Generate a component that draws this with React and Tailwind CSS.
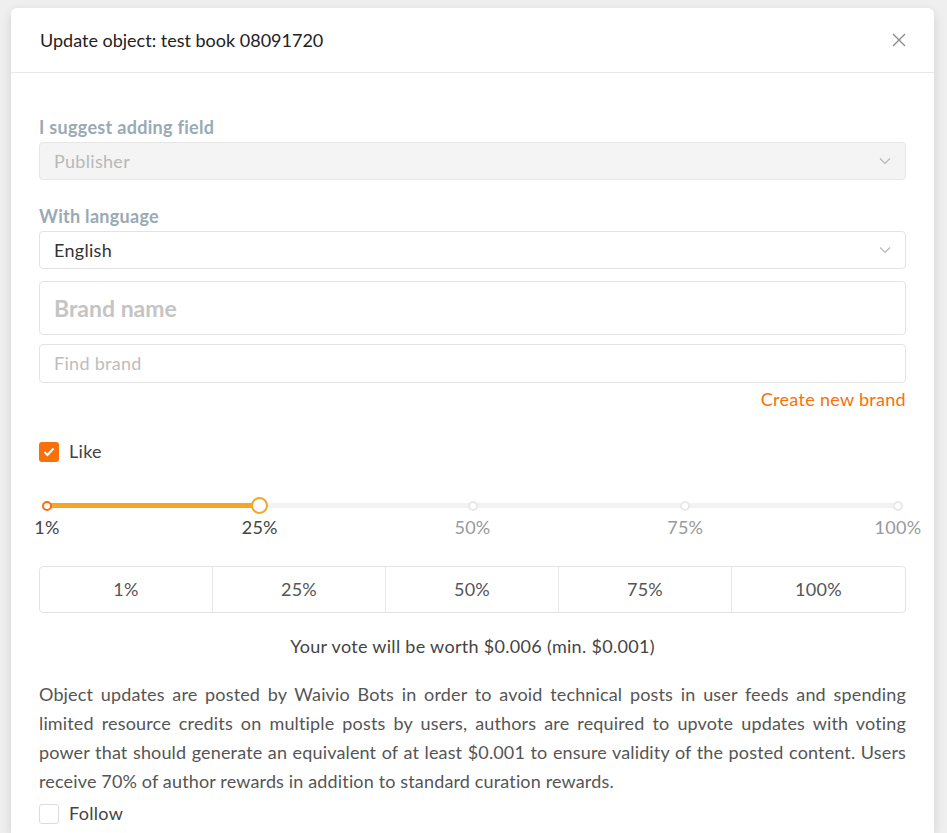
import React from "react";

const STEPS = [
  { label: "1%", pos: 0, active: true },
  { label: "25%", pos: 25, active: true },
  { label: "50%", pos: 50, active: false },
  { label: "75%", pos: 75, active: false },
  { label: "100%", pos: 100, active: false },
];

function Chevron() {
  return (
    <svg width="12" height="12" viewBox="0 0 12 12" className="text-[#b5b5b5]" aria-hidden>
      <path d="M1 3.5 L6 8.5 L11 3.5" fill="none" stroke="currentColor" strokeWidth="1.1" />
    </svg>
  );
}

export default function App() {
  return (
    <div className="bg-[#efefef] pt-2 pl-[11px] pr-[13px] font-['Lato','Noto_Sans',sans-serif] overflow-hidden h-[833px]">
      <div className="bg-white rounded-t-md shadow-[0_4px_12px_rgba(0,0,0,0.12)] h-full">
        {/* header */}
        <div className="h-[65px] border-b border-[#e8e8e8] flex items-center justify-between pl-[29px] pr-[27px]">
          <h1 className="text-[18px] text-[#222] leading-none">Update object: test book 08091720</h1>
          <button type="button" aria-label="Close" className="text-[#888]">
            <svg width="16" height="16" viewBox="0 0 16 16">
              <path d="M2 2 L14 14 M14 2 L2 14" stroke="currentColor" strokeWidth="1.3" fill="none" />
            </svg>
          </button>
        </div>

        <div className="px-[28px] pt-[44px] text-[18px] tracking-[0.3px]">
          <p className="font-bold text-[#99aab5] leading-5 mb-[5px]">I suggest adding field</p>
          <div className="h-[38px] rounded border border-[#e6e6e6] bg-[#f4f4f4] flex items-center justify-between px-[14px]">
            <span className="text-[#b8b8b8]">Publisher</span>
            <Chevron />
          </div>

          <p className="font-bold text-[#99aab5] leading-5 mt-[26px] mb-[5px]">With language</p>
          <div className="h-[38px] rounded border border-[#e3e3e3] bg-white flex items-center justify-between px-[14px]">
            <span className="text-[#333]">English</span>
            <Chevron />
          </div>

          <div className="mt-[12px] h-[54px] rounded border border-[#e3e3e3] flex items-center px-[14px]">
            <span className="text-[23px] font-bold text-[#c4c4c4] tracking-normal">Brand name</span>
          </div>
          <div className="mt-[9px] h-[39px] rounded border border-[#e3e3e3] flex items-center px-[14px]">
            <span className="text-[#bdbdbd]">Find brand</span>
          </div>
          <div className="flex justify-end mt-[6px]">
            <span className="text-[#f87007] leading-5">Create new brand</span>
          </div>

          <div className="flex items-center gap-[10px] mt-[29px]">
            <span className="w-[20px] h-[20px] rounded-[3px] bg-[#f87007] flex items-center justify-center">
              <svg width="12" height="10" viewBox="0 0 12 10">
                <path d="M1.5 5 L4.5 8 L10.5 1.5" stroke="white" strokeWidth="2" fill="none" />
              </svg>
            </span>
            <span className="text-[#444]">Like</span>
          </div>

          {/* slider */}
          <div className="mt-[35px] px-[8px]">
            <div className="relative h-[10px]">
              <div className="absolute left-0 right-0 top-[3px] h-[5px] rounded bg-[#f2f2f2]" />
              <div className="absolute left-0 w-[25%] top-[3px] h-[5px] rounded bg-[#f6a623]" />
              {STEPS.map((s) => (
                <span
                  key={s.label}
                  className={`absolute top-[0.5px] w-[10px] h-[10px] -ml-[5px] rounded-full bg-white border-2 ${
                    s.active ? "border-[#f87007]" : "border-[#e8e8e8]"
                  }`}
                  style={{ left: `${s.pos}%` }}
                />
              ))}
              <span className="absolute left-[25%] -top-[3px] w-[17px] h-[17px] -ml-[8.5px] rounded-full bg-white border-2 border-[#f6a623]" />
            </div>
            <div className="relative h-[20px] mt-[7px]">
              {STEPS.map((s) => (
                <span
                  key={s.label}
                  className={`absolute -translate-x-1/2 leading-5 ${s.active ? "text-[#444]" : "text-[#999]"}`}
                  style={{ left: `${s.pos}%` }}
                >
                  {s.label}
                </span>
              ))}
            </div>
          </div>

          {/* quick buttons */}
          <div className="mt-[29px] h-[47px] grid grid-cols-5 rounded border border-[#e3e3e3] divide-x divide-[#e8e8e8]">
            {STEPS.map((s) => (
              <div key={s.label} className="flex items-center justify-center text-[#555]">
                {s.label}
              </div>
            ))}
          </div>

          <p className="text-center text-[#444] mt-[23px] leading-5">
            Your vote will be worth $0.006 (min. $0.001)
          </p>

          <p className="mt-[24px] leading-[29px] text-[#555] text-justify tracking-[0.15px]">
            Object updates are posted by Waivio Bots in order to avoid technical posts in user feeds and spending limited
            resource credits on multiple posts by users, authors are required to upvote updates with voting power that
            should generate an equivalent of at least $0.001 to ensure validity of the posted content. Users receive 70%
            of author rewards in addition to standard curation rewards.
          </p>

          <div className="flex items-center gap-[10px] mt-[4px]">
            <span className="w-[20px] h-[20px] rounded-[3px] border border-[#dcdcdc] bg-white" />
            <span className="text-[#444]">Follow</span>
          </div>
        </div>
      </div>
    </div>
  );
}
